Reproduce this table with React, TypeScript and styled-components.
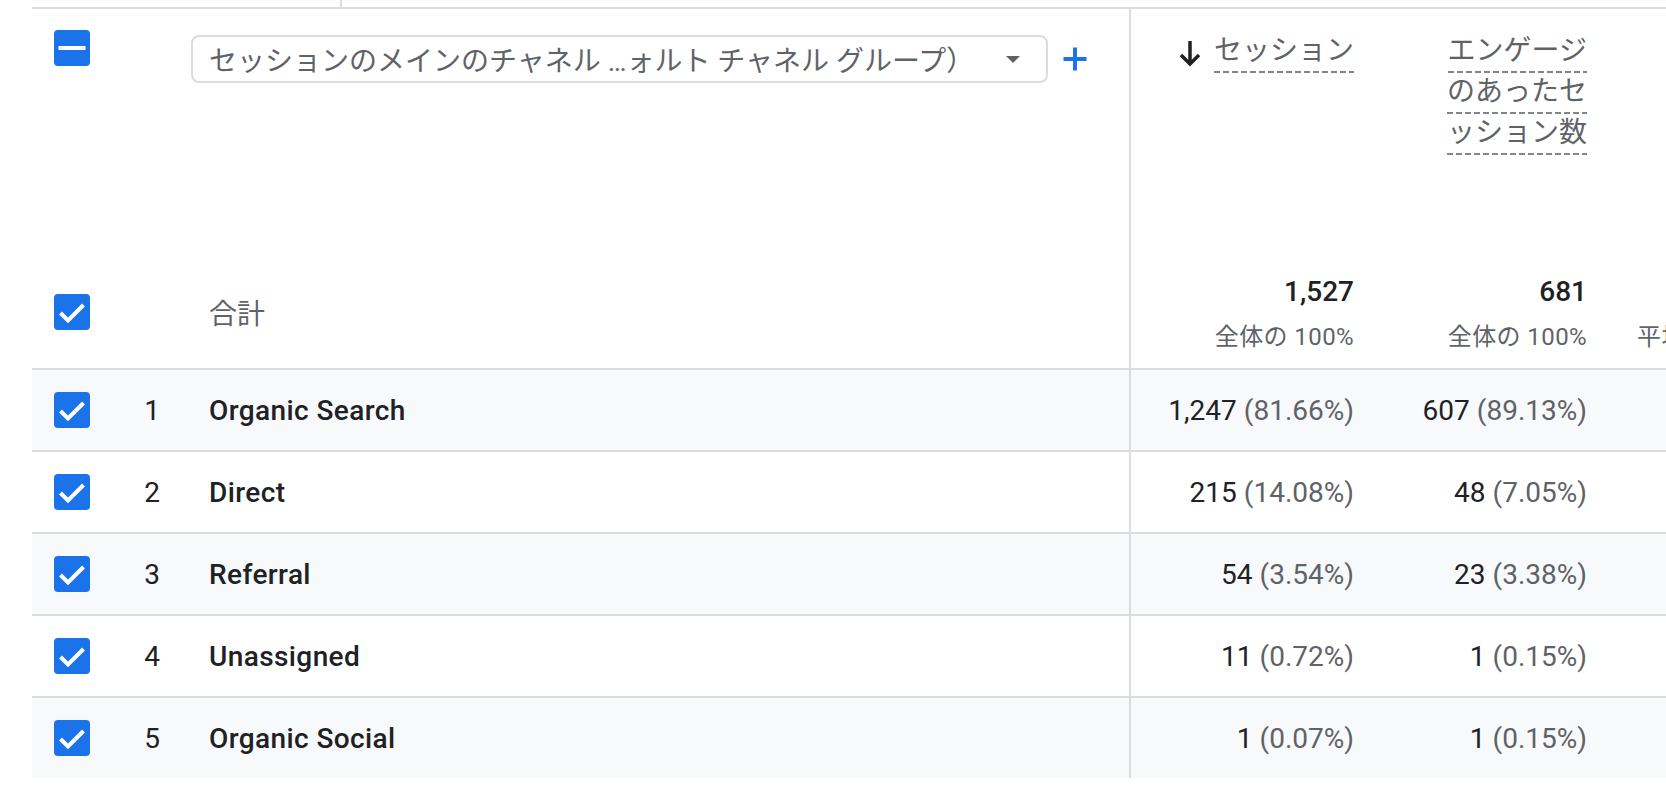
import React from 'react';
import styled, { createGlobalStyle } from 'styled-components';

const LINE = '#dadce0';
const BLUE = '#1a73e8';
const GREY_TEXT = '#5f6368';
const COLUMNS = '90px 45px 964px 240px 233px 210px';

const GlobalStyle = createGlobalStyle`
  *, *::before, *::after { box-sizing: border-box; }
  html, body { margin: 0; padding: 0; background: #ffffff; }
  body {
    width: 1666px;
    height: 808px;
    overflow: hidden;
    font-family: Roboto, "Noto Sans CJK JP", sans-serif;
    color: #202124;
    -webkit-font-smoothing: antialiased;
  }
`;

const Page = styled.div`
  padding-left: 32px;
`;

const TopStrip = styled.div`
  height: 7px;
  display: flex;
`;

const TopStripSegment = styled.div`
  width: 310px;
  border-right: 2px solid ${LINE};
`;

const Table = styled.div`
  width: 1782px;
  border-top: 2px solid ${LINE};
`;

const Header = styled.div`
  display: grid;
  grid-template-columns: ${COLUMNS};
  grid-template-rows: 251px 108px;
  border-bottom: 2px solid ${LINE};
`;

const HeadCheckCell = styled.div`
  padding: 21px 0 0 22px;
`;

const EmptyCell = styled.div``;

const DimensionCell = styled.div`
  border-right: 2px solid ${LINE};
  padding: 26px 0 0 24px;
`;

const DimensionControls = styled.div`
  display: flex;
  align-items: center;
  gap: 15px;
`;

const Select = styled.div`
  width: 857px;
  height: 48px;
  border: 2px solid ${LINE};
  border-radius: 8px;
  display: flex;
  align-items: center;
  gap: 12px;
  padding: 0 26px 0 16px;
  font-size: 28px;
  color: ${GREY_TEXT};
`;

const SelectText = styled.span`
  flex: 1;
  white-space: nowrap;
  overflow: hidden;
`;

const SelectCaret = styled.span`
  width: 0;
  height: 0;
  border-left: 7px solid transparent;
  border-right: 7px solid transparent;
  border-top: 7px solid ${GREY_TEXT};
`;

const AddButton = styled.span`
  display: flex;
  width: 24px;
  height: 24px;
`;

const MetricHeadCell = styled.div`
  display: flex;
  justify-content: flex-end;
  align-items: flex-start;
  gap: 13px;
  padding: 23px 17px 0 0;
`;

const SortIcon = styled.span`
  display: flex;
  margin-top: 8px;
`;

const Label = styled.div`
  display: flex;
  flex-direction: column;
  align-items: flex-end;
`;

const LabelLine = styled.span`
  display: block;
  font-size: 28px;
  line-height: 37px;
  padding-bottom: 4px;
  color: ${GREY_TEXT};
  white-space: nowrap;
  background-image: linear-gradient(to right, #80868b 6px, transparent 6px);
  background-size: 9px 2px;
  background-repeat: repeat-x;
  background-position: 0 100%;
`;

const TotalCheckCell = styled.div`
  display: flex;
  align-items: center;
  padding: 0 0 4px 22px;
`;

const TotalLabelCell = styled.div`
  display: flex;
  align-items: center;
  padding: 0 0 4px 42px;
  border-right: 2px solid ${LINE};
  font-size: 28px;
  color: ${GREY_TEXT};
`;

const TotalCell = styled.div`
  display: flex;
  flex-direction: column;
  align-items: flex-end;
  gap: 5px;
  padding: 12px 17px 0 0;
  white-space: nowrap;
`;

const TotalValue = styled.div`
  height: 40px;
  font-size: 28px;
  line-height: 40px;
  font-weight: 500;
  color: #202124;
`;

const TotalSub = styled.div`
  font-size: 24px;
  line-height: 40px;
  letter-spacing: 0.4px;
  color: ${GREY_TEXT};
`;

const Row = styled.div<{ $shaded: boolean }>`
  display: grid;
  grid-template-columns: ${COLUMNS};
  height: 82px;
  background: ${(p) => (p.$shaded ? '#f8f9fa' : '#ffffff')};
  border-bottom: 2px solid ${LINE};
  &:last-child {
    border-bottom: none;
    height: 80px;
  }
`;

const RowCheckCell = styled.div`
  display: flex;
  align-items: center;
  padding-left: 22px;
`;

const IndexCell = styled.div`
  display: flex;
  align-items: center;
  justify-content: flex-end;
  padding-right: 7px;
  font-size: 28px;
  color: #202124;
`;

const NameCell = styled.div`
  display: flex;
  align-items: center;
  padding-left: 42px;
  border-right: 2px solid ${LINE};
  font-size: 28px;
  font-weight: 500;
  letter-spacing: 0.4px;
  color: #202124;
  white-space: nowrap;
`;

const ValueCell = styled.div`
  display: flex;
  align-items: center;
  justify-content: flex-end;
  padding-right: 17px;
  font-size: 28px;
  color: #202124;
  white-space: nowrap;
`;

const Pct = styled.span`
  color: ${GREY_TEXT};
  margin-left: 7px;
`;

const CheckBoxWrap = styled.span`
  display: flex;
  width: 36px;
  height: 36px;
`;

type CheckState = 'checked' | 'indeterminate';

function Checkbox({ state }: { state: CheckState }) {
  return (
    <CheckBoxWrap>
      <svg width="36" height="36" viewBox="0 0 36 36">
        <rect x="0" y="0" width="36" height="36" rx="4" fill={BLUE} />
        {state === 'checked' ? (
          <polyline
            points="6.5,19 14,26.5 29.5,11"
            fill="none"
            stroke="#ffffff"
            strokeWidth="4"
          />
        ) : (
          <rect x="4.5" y="16" width="27" height="4" fill="#ffffff" />
        )}
      </svg>
    </CheckBoxWrap>
  );
}

function PlusIcon() {
  return (
    <svg width="24" height="24" viewBox="0 0 24 24">
      <rect x="0.5" y="10" width="23" height="4" fill={BLUE} />
      <rect x="10" y="0.5" width="4" height="23" fill={BLUE} />
    </svg>
  );
}

function SortDownIcon() {
  return (
    <svg width="22" height="27" viewBox="0 0 22 27">
      <path d="M11 1 V24" stroke="#202124" strokeWidth="3.5" fill="none" />
      <path d="M2 15 L11 24 L20 15" stroke="#202124" strokeWidth="3.5" fill="none" />
    </svg>
  );
}

type DataRow = {
  index: number;
  name: string;
  sessions: string;
  sessionsPct: string;
  engaged: string;
  engagedPct: string;
};

const rows: DataRow[] = [
  { index: 1, name: 'Organic Search', sessions: '1,247', sessionsPct: '(81.66%)', engaged: '607', engagedPct: '(89.13%)' },
  { index: 2, name: 'Direct', sessions: '215', sessionsPct: '(14.08%)', engaged: '48', engagedPct: '(7.05%)' },
  { index: 3, name: 'Referral', sessions: '54', sessionsPct: '(3.54%)', engaged: '23', engagedPct: '(3.38%)' },
  { index: 4, name: 'Unassigned', sessions: '11', sessionsPct: '(0.72%)', engaged: '1', engagedPct: '(0.15%)' },
  { index: 5, name: 'Organic Social', sessions: '1', sessionsPct: '(0.07%)', engaged: '1', engagedPct: '(0.15%)' },
];

export default function App() {
  return (
    <>
      <GlobalStyle />
      <Page>
        <TopStrip>
          <TopStripSegment />
        </TopStrip>
        <Table>
          <Header>
            <HeadCheckCell>
              <Checkbox state="indeterminate" />
            </HeadCheckCell>
            <EmptyCell />
            <DimensionCell>
              <DimensionControls>
                <Select>
                  <SelectText>セッションのメインのチャネル …ォルト チャネル グループ）</SelectText>
                  <SelectCaret />
                </Select>
                <AddButton>
                  <PlusIcon />
                </AddButton>
              </DimensionControls>
            </DimensionCell>
            <MetricHeadCell>
              <SortIcon>
                <SortDownIcon />
              </SortIcon>
              <Label>
                <LabelLine>セッション</LabelLine>
              </Label>
            </MetricHeadCell>
            <MetricHeadCell>
              <Label>
                <LabelLine>エンゲージ</LabelLine>
                <LabelLine>のあったセ</LabelLine>
                <LabelLine>ッション数</LabelLine>
              </Label>
            </MetricHeadCell>
            <MetricHeadCell />

            <TotalCheckCell>
              <Checkbox state="checked" />
            </TotalCheckCell>
            <EmptyCell />
            <TotalLabelCell>合計</TotalLabelCell>
            <TotalCell>
              <TotalValue>1,527</TotalValue>
              <TotalSub>全体の 100%</TotalSub>
            </TotalCell>
            <TotalCell>
              <TotalValue>681</TotalValue>
              <TotalSub>全体の 100%</TotalSub>
            </TotalCell>
            <TotalCell>
              <TotalValue />
              <TotalSub>平均との差 0%</TotalSub>
            </TotalCell>
          </Header>
          {rows.map((r) => (
            <Row key={r.index} $shaded={r.index % 2 === 1}>
              <RowCheckCell>
                <Checkbox state="checked" />
              </RowCheckCell>
              <IndexCell>{r.index}</IndexCell>
              <NameCell>{r.name}</NameCell>
              <ValueCell>
                {r.sessions}
                <Pct>{r.sessionsPct}</Pct>
              </ValueCell>
              <ValueCell>
                {r.engaged}
                <Pct>{r.engagedPct}</Pct>
              </ValueCell>
              <ValueCell />
            </Row>
          ))}
        </Table>
      </Page>
    </>
  );
}
